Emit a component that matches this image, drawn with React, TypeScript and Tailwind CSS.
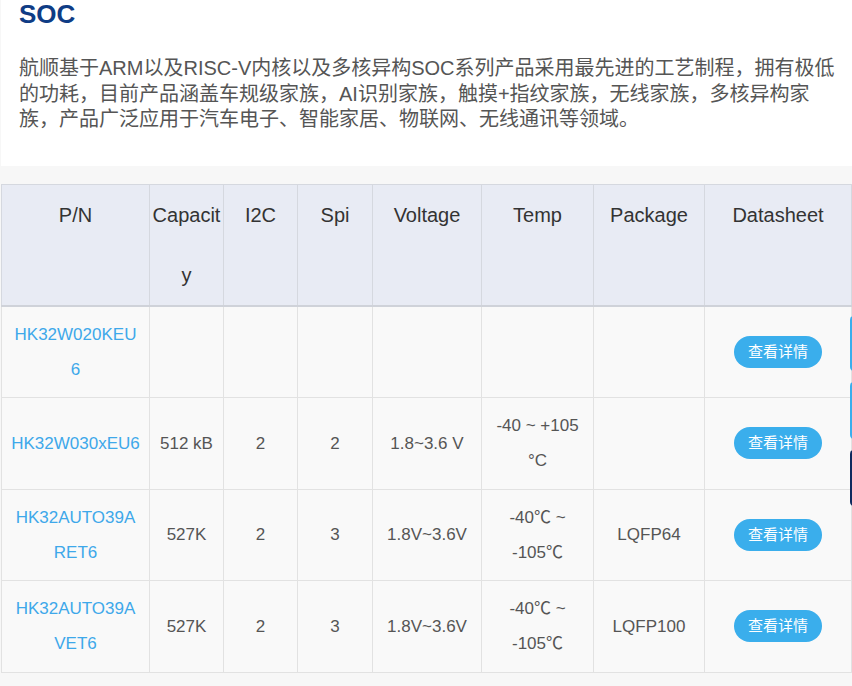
import React from "react"

interface Chip {
  pn: string
  capacity: string
  i2c: string
  spi: string
  voltage: string
  temp: string
  pkg: string
}

const chips: Chip[] = [
  { pn: "HK32W020KEU6", capacity: "", i2c: "", spi: "", voltage: "", temp: "", pkg: "" },
  { pn: "HK32W030xEU6", capacity: "512 kB", i2c: "2", spi: "2", voltage: "1.8~3.6 V", temp: "-40 ~ +105 °C", pkg: "" },
  { pn: "HK32AUTO39ARET6", capacity: "527K", i2c: "2", spi: "3", voltage: "1.8V~3.6V", temp: "-40℃ ~ -105℃", pkg: "LQFP64" },
  { pn: "HK32AUTO39AVET6", capacity: "527K", i2c: "2", spi: "3", voltage: "1.8V~3.6V", temp: "-40℃ ~ -105℃", pkg: "LQFP100" },
]

const headers = ["P/N", "Capacity", "I2C", "Spi", "Voltage", "Temp", "Package", "Datasheet"]
const widths = [148, 74, 74, 75, 109, 112, 111, 147]

export default function App() {
  return (
    <div className="relative min-h-[686px] bg-[#f7f7f7] pl-[1px] font-['Liberation_Sans','Noto_Sans_CJK_SC',sans-serif] overflow-hidden">
      {/* Intro panel */}
      <div className="bg-white pl-[18px] pr-[13px] pb-[33px]">
        <h2 className="text-[26px] leading-[28px] font-bold text-[#0f3c85]">SOC</h2>
        <p className="mt-[28px] w-[820px] text-[20px] leading-[25.5px] text-[#555]">
          航顺基于ARM以及RISC-V内核以及多核异构SOC系列产品采用最先进的工艺制程，拥有极低的功耗，目前产品涵盖车规级家族，AI识别家族，触摸+指纹家族，无线家族，多核异构家族，产品广泛应用于汽车电子、智能家居、物联网、无线通讯等领域。
        </p>
      </div>

      {/* Product table */}
      <table className="mt-[18px] w-[850px] table-fixed border-collapse">
        <colgroup>
          {widths.map((w, i) => (
            <col key={i} style={{ width: w }} />
          ))}
        </colgroup>
        <thead>
          <tr className="bg-[#e8ebf4] border-b-2 border-[#cfd2d9]">
            {headers.map((h) => (
              <th
                key={h}
                className="border border-[#d5d8df] px-[2px] align-top text-center text-[20px] leading-[60px] font-normal text-[#333] break-all"
              >
                {h}
              </th>
            ))}
          </tr>
        </thead>
        <tbody>
          {chips.map((c) => (
            <tr key={c.pn} className="bg-[#f9f9f9]">
              <td className="border border-[#e2e2e2] px-[9px] py-[10px] text-center align-middle text-[17px] leading-[35.25px] text-[#3ea8ea] break-all">
                {c.pn}
              </td>
              {[c.capacity, c.i2c, c.spi, c.voltage, c.temp, c.pkg].map((v, i) => (
                <td
                  key={i}
                  className="border border-[#e2e2e2] px-[9px] py-[10px] text-center align-middle text-[17px] leading-[35.25px] text-[#555]"
                >
                  {v}
                </td>
              ))}
              <td className="border border-[#e2e2e2] px-[9px] py-[10px] text-center align-middle">
                <button className="h-[32px] rounded-full bg-[#3aaeec] px-[14px] text-[15px] leading-[32px] text-white">
                  查看详情
                </button>
              </td>
            </tr>
          ))}
        </tbody>
      </table>

      {/* Floating side buttons, clipped at the right edge */}
      <div className="absolute right-[-60px] top-[316px] flex flex-col gap-[11px]">
        <div className="h-[55px] w-[62px] rounded-l-[4px] bg-[#3aaeec]" />
        <div className="h-[57px] w-[62px] rounded-l-[4px] bg-[#3aaeec]" />
        <div className="h-[56px] w-[62px] rounded-l-[4px] bg-[#0e2a5e]" />
      </div>
    </div>
  )
}
